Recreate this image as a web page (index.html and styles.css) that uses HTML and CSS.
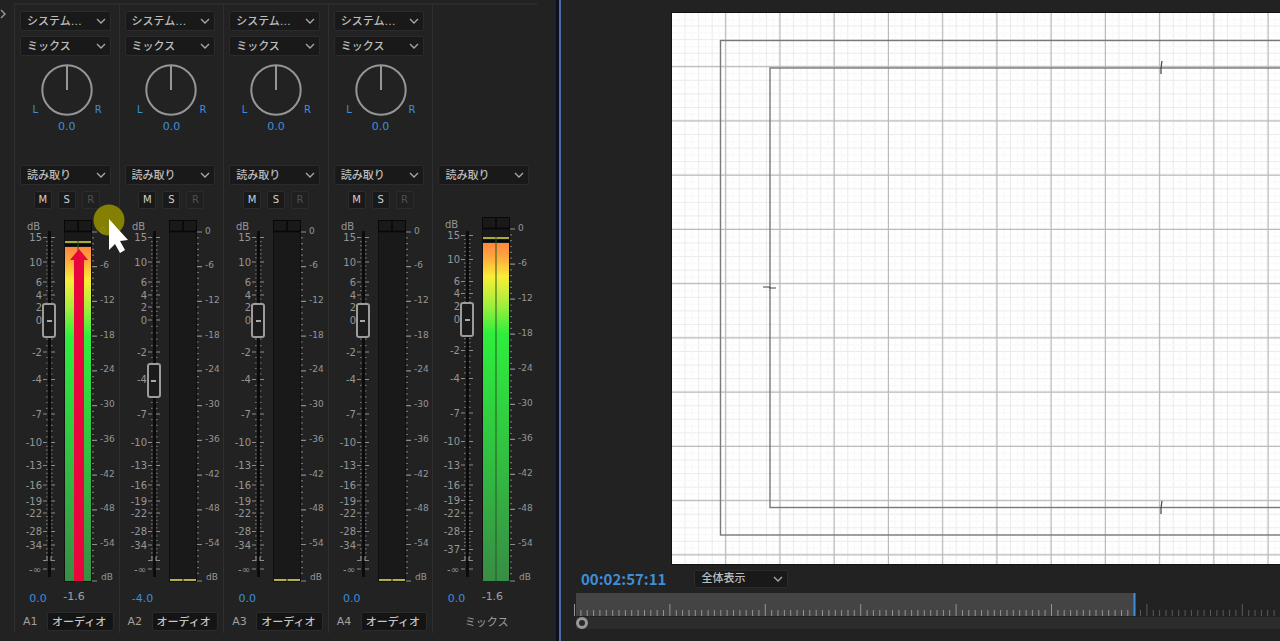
FILE: index.html
```html
<!DOCTYPE html>
<html lang="ja">
<head>
<meta charset="utf-8">
<title>オーディオトラックミキサー</title>
<link rel="stylesheet" href="styles.css">
</head>
<body>
<main class="workspace">
  <section class="mixer" aria-label="オーディオトラックミキサー">
    <div class="gutter">
      <button class="expand" type="button" aria-label="展開">
        <svg width="7" height="10" viewBox="0 0 7 10"><path d="M1 1l4 4-4 4" fill="none" stroke="#a0a0a0" stroke-width="1.3"/></svg>
      </button>
    </div>
    <div class="strips" id="strips"></div>
    <div class="pointer" aria-hidden="true">
      <svg width="40" height="50" viewBox="0 0 40 50">
        <circle cx="17" cy="17" r="15.5" fill="#918d00" fill-opacity=".88"/>
        <path d="M17 16v31l6-6 5 9 5-3-5-9 8-1z" fill="#fff"/>
      </svg>
    </div>
  </section>
  <section class="monitor" aria-label="プログラムモニター">
    <div class="stage">
      <svg class="frame" width="100%" height="551" aria-label="セーフマージン">
        <defs>
          <pattern id="minor" width="13.56" height="13.56" patternUnits="userSpaceOnUse">
            <path d="M13 0v13.56M0 13h13.56" fill="none" stroke="#eaeaea"/>
            <path d="M6.5 0v13.56M0 6.5h13.56" fill="none" stroke="#f8f8f8"/>
          </pattern>
          <pattern id="major" width="54.24" height="54.24" patternUnits="userSpaceOnUse">
            <path d="M53.7 0v54.24M0 53.7h54.24" fill="none" stroke="#b8b8b8" stroke-width="1.2"/>
          </pattern>
        </defs>
        <rect width="100%" height="100%" fill="#fff"/>
        <rect width="100%" height="100%" fill="url(#minor)"/>
        <rect width="100%" height="100%" fill="url(#major)"/>
        <g fill="none" stroke="#787878" stroke-width="1.4">
          <rect x="48.5" y="27.5" width="882" height="494.5"/>
          <rect x="98" y="55" width="784" height="439.5"/>
        </g>
        <g fill="none" stroke="#444" stroke-width="1.2">
          <path d="M490 48l-1 7M489 55v6M490 488l-1 7M489 495v6M91 274h7M97 275h7"/>
        </g>
      </svg>
    </div>
    <div class="controls">
      <span class="timecode">00:02:57:11</span>
      <span class="picker zoom-picker">
        <select aria-label="ズームレベル"><option>全体表示</option></select>
        <svg class="chevron" width="10" height="6" viewBox="0 0 10 6"><path d="M1 1l4 4 4-4"/></svg>
      </span>
    </div>
    <div class="timeline">
      <svg id="ruler" width="100%" height="24" aria-label="タイムルーラー"></svg>
      <div class="scrollbar"><span class="scroll-handle"></span></div>
    </div>
  </section>
</main>
<script src="mixer.js"></script>
</body>
</html>
```

FILE: styles.css
```css
* {
  box-sizing: border-box;
}

body {
  margin: 0;
  background: #222;
  color: #a0a0a0;
  font-family: "DejaVu Sans", "Noto Sans CJK JP", sans-serif;
  font-size: 11px;
}

button,
input,
select {
  font: inherit;
  color: inherit;
}

.workspace {
  display: flex;
  min-height: 100vh;
  overflow: hidden;
}

.mixer {
  position: relative;
  display: flex;
  flex: 0 0 561px;
  padding: 3px 22px 8px 0;
  border-right: 2px solid #4a6da8;
  box-shadow: inset -3px 0 0 #0c1020;
}

.gutter {
  flex: 0 0 14px;
}

.expand {
  display: block;
  margin-top: 5px;
  padding: 1px 0;
  border: 0;
  background: none;
}

.strips {
  display: grid;
  flex: 1;
  grid-template-columns: repeat(5, minmax(0, 1fr));
  border-top: 2px solid #2b2b2b;
}

.strip {
  display: grid;
  grid-template-columns: minmax(0, 1fr);
  grid-template-rows: 20px 20px 99px 20px 19px 370px 17px 20px;
  row-gap: 5px;
  align-content: start;
  padding-top: 6px;
  border-left: 1px solid #2f2f2f;
}

.picker {
  position: relative;
  display: flex;
  align-items: center;
  margin: 0 8px 0 5px;
}

.picker select {
  width: 100%;
  height: 20px;
  padding: 1px 20px 0 6px;
  border: 1px solid #2b2b2b;
  border-radius: 2px;
  background: #191919;
  color: #bdbdbd;
  font-weight: 500;
  line-height: 18px;
  appearance: none;
}

.chevron {
  position: absolute;
  right: 5px;
  fill: none;
  stroke: #a8a8a8;
  stroke-width: 1.3;
  pointer-events: none;
}

.pan {
  display: flex;
  flex-direction: column;
  gap: 1px;
  align-items: center;
  padding-top: 3px;
  color: #3f8ddd;
}

.pan-row {
  display: flex;
  align-items: flex-end;
  gap: 1px;
  font-size: 10px;
}

.side {
  width: 9px;
  line-height: 12px;
  text-align: center;
}

.value {
  color: #3f8ddd;
  line-height: 20px;
}

.mode {
  grid-row: 4;
}

.toggles {
  display: flex;
  gap: 6px;
  align-items: flex-end;
  justify-content: center;
}

.toggle {
  width: 18px;
  height: 18px;
  padding: 0;
  border: 1px solid #2b2b2b;
  border-radius: 2px;
  background: #191919;
  color: #d0d0d0;
  font-size: 10px;
  line-height: 16px;
}

.toggle:disabled {
  background: #202020;
  color: #505050;
}

.fader {
  position: relative;
  grid-row: 6;
}

.fader-scale {
  display: block;
  overflow: visible;
}

.fader-scale text {
  fill: #969696;
}

.left-label {
  font-size: 10px;
  text-anchor: end;
}

.right-label {
  font-size: 9px;
}

.unit {
  font-size: 10px;
}

.slider {
  position: absolute;
  top: 0;
  left: 26px;
  width: 16px;
  height: 100%;
  margin: 0;
  background: none;
  appearance: none;
  writing-mode: vertical-lr;
  direction: rtl;
}

.slider::-webkit-slider-runnable-track {
  width: 16px;
  background: none;
}

.slider::-webkit-slider-thumb {
  width: 14px;
  height: 35px;
  margin-left: 1px;
  border: 2px solid #9c9c9c;
  border-radius: 3px;
  background: linear-gradient(#a8a8a8, #a8a8a8) center / 5px 2px no-repeat #1b1b1b;
  appearance: none;
}

.readout {
  display: grid;
  grid-row: 7;
  grid-template-columns: 24px 36px;
  column-gap: 6px;
  align-items: start;
  justify-content: start;
  margin-left: 11px;
  text-align: center;
}

.peak {
  line-height: 16px;
}

.track {
  display: flex;
  grid-row: 8;
  align-items: center;
  gap: 8px;
  margin: 0 5px 0 8px;
}

.track label {
  flex: 0 0 16px;
}

.track input {
  flex: 1;
  min-width: 0;
  height: 19px;
  padding: 0 4px;
  border: 1px solid #2b2b2b;
  border-radius: 2px;
  background: #141414;
  color: #c4c4c4;
  font-weight: 500;
}

.track-master {
  justify-content: center;
}

.pointer {
  position: absolute;
  top: 203px;
  left: 92px;
  pointer-events: none;
}

.monitor {
  display: flex;
  flex: 1;
  flex-direction: column;
  min-width: 0;
}

.stage {
  padding: 13px 0 0 111px;
}

.frame {
  display: block;
  box-shadow: 0 0 0 1px #111;
}

.controls {
  display: flex;
  align-items: center;
  gap: 28px;
  height: 29px;
  padding-left: 20px;
}

.timecode {
  color: #3e8ed8;
  font-family: "Noto Sans CJK JP", sans-serif;
  font-size: 15px;
  font-weight: 700;
  line-height: 20px;
}

.zoom-picker {
  flex: 0 0 94px;
  margin: 0;
}

.zoom-picker select {
  height: 18px;
  padding-top: 0;
  line-height: 16px;
}

.timeline {
  margin-left: 12px;
}

#ruler {
  display: block;
}

.scrollbar {
  height: 12px;
  margin-left: 3px;
  background: #2c2c2c;
}

.scroll-handle {
  display: block;
  width: 12px;
  height: 12px;
  border: 3px solid #999;
  border-radius: 50%;
}
```

FILE: mixer.js
```js
// All fader and meter ordinates are measured inside a 370px tall scale.
const channelTicks = [
  ['15', 23.5], ['10', 48], ['6', 68], ['4', 81], ['2', 93], ['0', 106],
  ['-2', 138], ['-4', 165.5], ['-7', 200], ['-10', 228.5], ['-13', 251.5],
  ['-16', 271], ['-19', 287], ['-22', 299], ['-28', 317.5], ['-34', 331]
];
const masterTicks = [
  ['15', 21.5], ['10', 45.5], ['6', 67.5], ['4', 79.5], ['2', 92], ['0', 105],
  ['-2', 136.5], ['-4', 164.5], ['-7', 199], ['-10', 227.5], ['-13', 251],
  ['-16', 271], ['-19', 286.5], ['-22', 299], ['-28', 317.5], ['-37', 335.5]
];

const strips = [
  { name: 'A1', gain: '0.0', peak: '-1.6', slider: 246, level: 33, arrow: true },
  { name: 'A2', gain: '-4.0', peak: '', slider: 186 },
  { name: 'A3', gain: '0.0', peak: '', slider: 246 },
  { name: 'A4', gain: '0.0', peak: '', slider: 246 },
  { name: 'ミックス', gain: '0.0', peak: '-1.6', slider: 247, level: 29, master: true }
];

const chevron = '<svg class="chevron" width="10" height="6" viewBox="0 0 10 6"><path d="M1 1l4 4 4-4"/></svg>';

function picker(text, label, extra = '') {
  return `<span class="picker ${extra}"><select aria-label="${label}"><option>${text}</option></select>${chevron}</span>`;
}

function scale(s) {
  const ticks = s.master ? masterTicks : channelTicks;
  const end = 346.5;
  const top = s.master ? 3 : 6;
  let labels = '';
  let marks = '';
  let dots = '';
  ticks.forEach(([text, y], i) => {
    labels += `<text class="left-label" x="27" y="${y + 3.5}">${text}</text>`;
    marks += `M28 ${y}h4M36 ${y}h4`;
    const next = i + 1 < ticks.length ? ticks[i + 1][1] : end;
    const step = y >= 106 && y < 228 ? 6 : 4;
    const count = Math.round((next - y) / step);
    for (let k = 1; k < count; k++) {
      const yy = (y + (next - y) * k / count).toFixed(1);
      dots += `M31 ${yy}h1.6M36 ${yy}h1.6`;
    }
  });
  marks += `M28 ${end}h4v-4M40 ${end}h-4v-4M28 355h4M36 355h4`;
  labels += `<text class="left-label" x="26" y="359">-∞</text>`;

  const zero = top + 12;
  const pitch = (330.5 - zero) / 9;
  let right = 'M77 367h5';
  for (let i = 0; i < 10; i++) {
    const y = zero + pitch * i;
    right += `M77 ${y.toFixed(1)}h5`;
    labels += `<text class="right-label" x="85" y="${(y + 1.5).toFixed(1)}">${i ? -6 * i : 0}</text>`;
    for (let k = 1; k < 6; k++) dots += `M77 ${(y + pitch * k / 6).toFixed(1)}h2`;
  }
  labels += `<text class="right-label" x="86" y="366">dB</text>`;
  labels += `<text class="unit" x="12" y="${s.master ? 14 : 16}">dB</text>`;

  let bar = `<rect x="49.5" y="${top + .5}" width="27" height="361" fill="#191919" stroke="#101010"/>
    <path d="M49.5 ${top + 11.5}h27M63 ${top}v11" stroke="#070707" stroke-width="1.4"/>
    <rect x="49.5" y="${top + .5}" width="27" height="11" fill="none" stroke="#070707"/>`;
  if (s.level) {
    bar += `<path d="M50 ${s.level - 5}h26" stroke="#a9ad35" stroke-width="2"/>
      <path d="M50 ${s.level - 2}h26" stroke="#080808" stroke-width="2"/>
      <rect x="50" y="${s.level}" width="26" height="${367 - s.level}" fill="url(#level)"/>
      <path d="M63 ${s.level - 6}V367" stroke="#265a20" stroke-width="1"/>`;
  } else {
    bar += '<path d="M50 366h12.5M63.5 366h12.5" stroke="#b5b04a" stroke-width="2"/>';
  }
  if (s.arrow) bar += '<path d="M64 35l9 11h-4v321h-10V46h-4z" fill="#e8063c"/>';

  return `<svg class="fader-scale" width="103" height="370">
    <defs><linearGradient id="level" x1="0" y1="0" x2="0" y2="1">
      <stop offset="0" stop-color="#ff873f"/><stop offset=".04" stop-color="#ffa63d"/>
      <stop offset=".1" stop-color="#f8ee38"/><stop offset=".18" stop-color="#a6ee3c"/>
      <stop offset=".27" stop-color="#2eee3c"/><stop offset=".6" stop-color="#31c441"/>
      <stop offset="1" stop-color="#388d45"/>
    </linearGradient></defs>
    <path d="M34.5 17v346" stroke="#0c0c0c" stroke-width="3"/>
    <path d="${dots}" stroke="#707070" stroke-width="1.2"/>
    <path d="${marks}${right}" stroke="#8c8c8c" stroke-width="1.2" fill="none"/>
    ${labels}${bar}
  </svg>`;
}

document.getElementById('strips').innerHTML = strips.map((s, i) => {
  const head = s.master ? '' : `
    ${picker('システム…', `${s.name} 入力`)}
    ${picker('ミックス', `${s.name} 出力`)}
    <div class="pan">
      <div class="pan-row"><span class="side">L</span>
        <svg width="52" height="52" viewBox="0 0 52 52" role="slider" aria-label="${s.name} パン" aria-valuenow="0">
          <circle cx="26" cy="26" r="24.7" fill="none" stroke="#969696" stroke-width="2"/>
          <path d="M26 2v24" stroke="#969696" stroke-width="2"/>
        </svg><span class="side">R</span></div>
      <span class="value">0.0</span>
    </div>`;
  const toggles = s.master ? '' : `<div class="toggles">
      <button class="toggle" type="button">M</button>
      <button class="toggle" type="button">S</button>
      <button class="toggle" type="button" disabled>R</button>
    </div>`;
  const track = s.master
    ? `<div class="track track-master">${s.name}</div>`
    : `<div class="track"><label for="track${i}">${s.name}</label><input id="track${i}" type="text" value="オーディオ"></div>`;
  return `<section class="strip">${head}
    ${picker('読み取り', `${s.name} オートメーション`, 'mode')}
    ${toggles}
    <div class="fader">${scale(s)}
      <input class="slider" type="range" min="0" max="335" value="${s.slider}" aria-label="${s.name} 音量">
    </div>
    <div class="readout"><span class="value">${s.gain}</span><span class="peak">${s.peak}</span></div>
    ${track}
  </section>`;
}).join('');

// Time ruler: one long tick for every fifteen short ones, dimmer past the playhead.
const playhead = 561;
let before = '';
let after = '';
for (let i = 0; i < 600; i++) {
  const x = 1.5 + i * 6.36;
  const d = `M${x.toFixed(1)} 23v${i % 15 ? -6 : -12}`;
  if (x < playhead) before += d; else after += d;
}
document.getElementById('ruler').innerHTML = `
  <rect x="3" width="${playhead - 3}" height="23" fill="#444"/>
  <path d="${before}" stroke="#949494"/>
  <path d="${after}" stroke="#5a5a5a"/>
  <path d="M${playhead + .5} 0v23" stroke="#3e8ed8" stroke-width="2"/>`;
```
